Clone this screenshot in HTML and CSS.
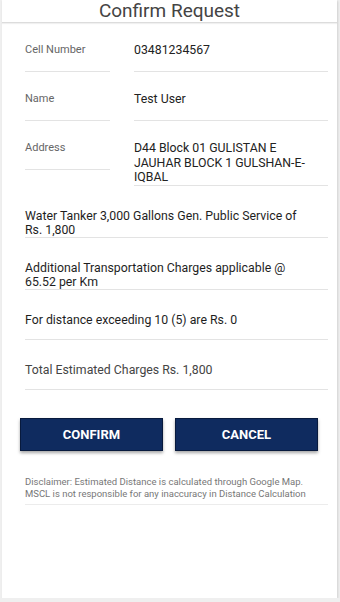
FILE: index.html
```html
<!DOCTYPE html>
<html lang="en">
<head>
<meta charset="UTF-8">
<meta name="viewport" content="width=device-width, initial-scale=1.0">
<title>Confirm Request</title>
<link rel="stylesheet" href="styles.css">
</head>
<body>

<div class="screen">
  <div class="title-bar">Confirm Request</div>

  <div class="request-body">
    <div class="field-row">
      <div class="field-label">Cell Number</div>
      <div class="field-value">03481234567</div>
    </div>
    <div class="field-row">
      <div class="field-label">Name</div>
      <div class="field-value">Test User</div>
    </div>
    <div class="field-row">
      <div class="field-label">Address</div>
      <div class="field-value">D44 Block 01 GULISTAN E JAUHAR BLOCK 1 GULSHAN-E-IQBAL</div>
    </div>

    <div class="info-row">Water Tanker 3,000 Gallons Gen. Public Service of Rs. 1,800</div>
    <div class="info-row">Additional Transportation Charges applicable @ 65.52 per Km</div>
    <div class="info-row">For distance exceeding 10 (5) are Rs. 0</div>
    <div class="info-row info-total">Total Estimated Charges Rs. 1,800</div>

    <div class="button-row">
      <button class="action-btn" id="confirmButton">CONFIRM</button>
      <button class="action-btn" id="cancelButton">CANCEL</button>
    </div>

    <p class="disclaimer">Disclaimer: Estimated Distance is calculated through Google Map. MSCL is not responsible for any inaccuracy in Distance Calculation</p>
  </div>
</div>

</body>
</html>
```

FILE: styles.css
```css
/* --- Basic Setup --- */
body {
  margin: 0;
  font-family: Roboto, "Liberation Sans", Arial, sans-serif;
  background-color: #efefef;
  color: #222;
}

/* --- Card that holds the whole screen --- */
.screen {
  margin: 0 3px 0 2px;
  height: 598px;
  background-color: #fff;
  box-shadow: 1px 1px 2px rgba(0, 0, 0, 0.12);
}

.title-bar {
  height: 22px;
  line-height: 22px;
  text-align: center;
  font-size: 19px;
  color: #444;
  border-bottom: 1px solid #dcdcdc;
  box-shadow: 0 1px 1px rgba(0, 0, 0, 0.06);
}

.request-body {
  padding: 0 9px 0 23px;
}

/* --- Label / value rows --- */
.field-row {
  display: grid;
  grid-template-columns: 85px 1fr;
  column-gap: 24px;
  align-items: start;
}

.field-label,
.field-value {
  padding-top: 20px;
  min-height: 28px;
  border-bottom: 1px solid #e3e3e3;
}

.field-label {
  font-size: 11px;
  line-height: 14px;
  color: #666;
}

.field-value {
  padding-right: 14px;
  font-size: 12.3px;
  line-height: 14.5px;
  color: #222;
}

/* --- Full width text rows --- */
.info-row {
  padding: 23px 18px 0 0;
  min-height: 26px;
  font-size: 12.3px;
  line-height: 14px;
  color: #1e1e1e;
  border-bottom: 1px solid #e3e3e3;
}

.info-total {
  color: #444;
}

/* --- Buttons --- */
.button-row {
  display: grid;
  grid-template-columns: 1fr 1fr;
  column-gap: 12px;
  margin: 28px 10px 0 -5px;
}

.action-btn {
  height: 33px;
  background-color: #0f2b5f;
  border: 1px solid #081a3d;
  color: #fff;
  font-family: Roboto, "Liberation Sans", Arial, sans-serif;
  font-size: 13px;
  font-weight: 700;
  box-shadow: 0 2px 3px rgba(0, 0, 0, 0.35);
  cursor: pointer;
}

.disclaimer {
  margin: 25px 0 0;
  padding: 0 20px 4px 0;
  font-size: 9.5px;
  line-height: 12px;
  color: #777;
  border-bottom: 1px solid #ececec;
}
```
